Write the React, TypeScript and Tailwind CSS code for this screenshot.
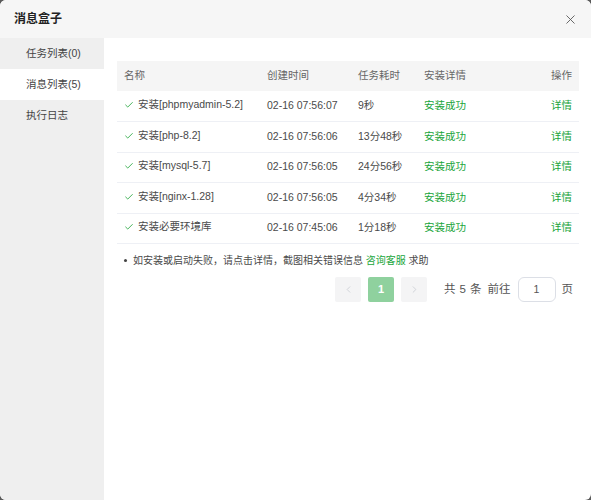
import { X, Check, ChevronLeft, ChevronRight } from "lucide-react"

const rows = [
  { name: "安装[phpmyadmin-5.2]", time: "02-16 07:56:07", cost: "9秒" },
  { name: "安装[php-8.2]", time: "02-16 07:56:06", cost: "13分48秒" },
  { name: "安装[mysql-5.7]", time: "02-16 07:56:05", cost: "24分56秒" },
  { name: "安装[nginx-1.28]", time: "02-16 07:56:05", cost: "4分34秒" },
  { name: "安装必要环境库", time: "02-16 07:45:06", cost: "1分18秒" },
]

const tabs = [
  { label: "任务列表(0)", active: false },
  { label: "消息列表(5)", active: true },
  { label: "执行日志", active: false },
]

const App = () => {
  return (
    <div
      className="w-[591px] h-[500px] bg-[#5a5a5a] text-[#333] text-[10.5px]"
      style={{ fontFamily: '"Liberation Sans", "Noto Sans CJK SC", sans-serif' }}
    >
      <div className="flex flex-col w-full h-full bg-white rounded-[6px] overflow-hidden">
        <header className="flex items-center justify-between h-[38px] pl-[14px] pr-[13px] bg-[#f6f6f6] shrink-0">
          <h1 className="text-[12px] font-bold text-[#222]">消息盒子</h1>
          <button aria-label="关闭" className="text-[#555]">
            <X size={15} strokeWidth={1.4} />
          </button>
        </header>

        <div className="flex flex-1 min-h-0">
          <nav className="flex flex-col w-[104px] bg-[#efefef] shrink-0">
            {tabs.map((tab) => (
              <div
                key={tab.label}
                className={`flex items-center h-[31px] pl-[26px] text-[#444] ${tab.active ? "bg-white" : ""}`}
              >
                {tab.label}
              </div>
            ))}
          </nav>

          <main className="flex-1 pl-[13px] pr-[12px] pt-[23px]">
            <table className="w-full table-fixed border-collapse">
              <thead>
                <tr className="bg-[#f5f5f5] text-[#666]">
                  <th className="h-[30px] font-normal text-left pl-[7px] w-[150px]">名称</th>
                  <th className="font-normal text-left w-[91px]">创建时间</th>
                  <th className="font-normal text-left w-[66px]">任务耗时</th>
                  <th className="font-normal text-left">安装详情</th>
                  <th className="font-normal text-right pr-[7px] w-[60px]">操作</th>
                </tr>
              </thead>
              <tbody>
                {rows.map((row) => (
                  <tr key={row.name} className="border-b border-[#eef0f5]">
                    <td className="h-[30.5px] pl-[7px] text-[#4a4a4a] whitespace-nowrap">
                      <span className="inline-flex items-center gap-[4px]">
                        <Check size={10} strokeWidth={2} className="text-[#20a53a]" />
                        {row.name}
                      </span>
                    </td>
                    <td className="text-[#4a4a4a]">{row.time}</td>
                    <td className="text-[#4a4a4a]">{row.cost}</td>
                    <td className="text-[#20a53a]">安装成功</td>
                    <td className="text-right pr-[7px] text-[#20a53a]">详情</td>
                  </tr>
                ))}
              </tbody>
            </table>

            <ul className="mt-[8px] pl-[7px] text-[#4a4a4a] text-[10px]">
              <li className="flex items-center gap-[6px] h-[16px]">
                <span className="w-[3px] h-[3px] rounded-full bg-[#444]" />
                <span>
                  如安装或启动失败，请点击详情，截图相关错误信息 <span className="text-[#20a53a]">咨询客服</span> 求助
                </span>
              </li>
            </ul>

            <div className="flex items-center justify-end mt-[9px] pr-[6px] text-[#555] text-[11.5px]">
              <button className="flex items-center justify-center w-[26px] h-[25px] bg-[#f4f4f5] rounded-[2px] text-[#c0c4cc]">
                <ChevronLeft size={11} strokeWidth={1.5} />
              </button>
              <button className="flex items-center justify-center w-[26px] h-[25px] ml-[7px] bg-[#8fd19e] rounded-[2px] text-white text-[11px] font-bold">
                1
              </button>
              <button className="flex items-center justify-center w-[26px] h-[25px] ml-[7px] bg-[#f4f4f5] rounded-[2px] text-[#c0c4cc]">
                <ChevronRight size={11} strokeWidth={1.5} />
              </button>
              <span className="ml-[17px]">共</span>
              <span className="ml-[4px]">5</span>
              <span className="ml-[4px]">条</span>
              <span className="ml-[6px]">前往</span>
              <div className="flex items-center justify-center w-[38px] h-[25px] ml-[7px] border border-[#dcdfe6] rounded-[6px] text-[10.5px]">
                1
              </div>
              <span className="ml-[6px]">页</span>
            </div>
          </main>
        </div>
      </div>
    </div>
  )
}

export default App
